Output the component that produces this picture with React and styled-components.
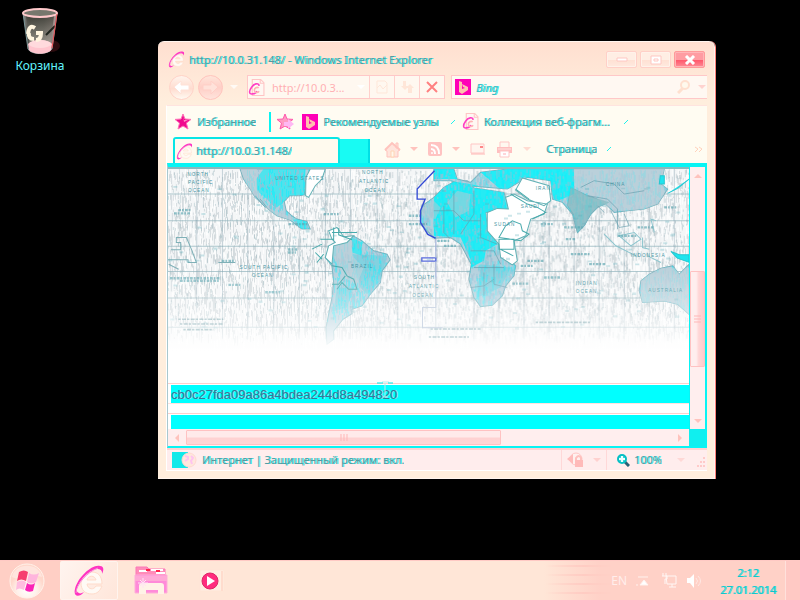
import React from 'react';
import styled, { createGlobalStyle, css } from 'styled-components';

const Global = createGlobalStyle`
  * { box-sizing: border-box; }
  body { margin: 0; background: #000; font: 11px/16px "Noto Sans", "Open Sans", sans-serif; color: #28aeb0; }
  button, input { font: inherit; color: inherit; margin: 0; padding: 0; border: 0; background: none; border-radius: 0; }
  button { display: flex; align-items: center; justify-content: center; cursor: pointer; }
  a { color: inherit; text-decoration: none; }
  svg { display: block; flex: none; }
`;

const Desktop = styled.div`
  min-height: 100vh;
  display: grid;
  grid-template: 1fr 40px / 80px minmax(0, 1fr);
`;
const Shortcut = styled.a`
  display: flex;
  flex-direction: column;
  align-items: center;
  gap: 2px;
  padding-top: 8px;
  height: 80px;
  font-size: 12px;
  color: #62f4ff;
`;
const Window = styled.main`
  margin: 41px 85px 81px 78px;
  display: flex;
  flex-direction: column;
  padding: 1px 7px 7px 8px;
  border: 1px solid #fff5ef;
  border-width: 1px 1px 1px 0;
  border-radius: 6px 6px 0 0;
  background: linear-gradient(#ffdfd0, #ffeedd 60px);
  box-shadow: 1px 0 0 #ff8078;
  min-width: 0;
`;
const TitleBar = styled.header`
  height: 31px;
  display: flex;
  align-items: center;
  gap: 3px;
  padding: 2px 2px 0;
`;
const Glitch = styled.span`
  font-size: 11px;
  color: #56999f;
  text-shadow: 1px 0 0 #24f2ee;
  white-space: nowrap;
  overflow: hidden;
  text-overflow: ellipsis;
`;
const Title = styled(Glitch)`flex: 1; padding-left: 1px;`;
const WindowButton = styled.button`
  width: 31px;
  height: 17px;
  border: 1px solid #ffd0c8;
  border-radius: 2px;
  background: linear-gradient(#ffeee4 50%, #ffe0d3 50%, #ffeadf);
  box-shadow: inset 0 0 0 1px #fff2ea;
  ${(p) => p.$close && css`
    border-color: #ff9a9a;
    background: linear-gradient(#ff9ca2 50%, #ff5368 50%, #ff8c96);
    box-shadow: inset 0 0 0 1px #ffb5b8;
  `}
`;
const NavBar = styled.nav`
  height: 31px;
  display: flex;
  align-items: flex-start;
  padding-top: 1px;
`;
const History = styled.div`
  display: flex;
  width: 81px;
  height: 24px;
  gap: 4px;
  align-items: center;
  padding-left: 3px;
`;
const RoundButton = styled.button`
  width: 25px;
  height: 25px;
  border-radius: 50%;
  border: 1px solid ${(p) => (p.$dim ? '#ffc4bd' : '#ffd3c8')};
  background: ${(p) => (p.$dim ? 'linear-gradient(#ffe5da, #ffcfc7 50%, #ffe4dc)' : 'linear-gradient(#fff4ed, #ffdccf 55%, #fffaf2)')};
`;
const Address = styled.div`
  display: flex;
  align-items: center;
  height: 24px;
  width: 198px;
  border: 1px solid #ffc8c8;
  background: #fff8f0;
`;
const AddressInput = styled.input`
  flex: 1;
  min-width: 0;
  height: 20px;
  padding-left: 7px;
  font-size: 11px;
  color: #ffb0b3;
  outline: 0;
`;
const AddressButton = styled.button`
  width: 25px;
  height: 22px;
  border-left: 1px solid #ffd0cc;
`;
const Search = styled.div`
  display: flex;
  flex: 1;
  min-width: 0;
  height: 24px;
  align-items: center;
  gap: 5px;
  margin-left: 6px;
  padding-left: 3px;
  border: 1px solid #ffc8c8;
  border-right: 0;
  background: #fff8f2;
`;
const SearchInput = styled.input`
  flex: 1;
  min-width: 0;
  height: 20px;
  outline: 0;
  font-style: italic;
  text-shadow: 1px 0 0 #24f2ee;
  &::placeholder { color: #3fb6bb; opacity: 1; }
`;
const BareButton = styled.button`
  min-width: ${(p) => p.$w || 16}px;
  height: 20px;
`;
const Panel = styled.section`
  flex: 1;
  display: flex;
  flex-direction: column;
  border-top: 1px solid #ffe4df;
  border-left: 1px solid #fff;
  background: #fffcf2;
  min-width: 0;
`;
const Favorites = styled.div`
  height: 31px;
  display: flex;
  align-items: center;
  gap: 6px;
  padding-left: 8px;
`;
const FavLink = styled.a`
  display: flex;
  align-items: center;
  gap: 5px;
  height: 20px;
  margin-right: ${(p) => p.$gap || 0}px;
`;
const FavSplit = styled.span`
  width: 2px;
  height: 20px;
  background: #08f4f2;
`;
const TabRow = styled.div`
  height: 26px;
  display: flex;
  align-items: stretch;
  padding-left: 6px;
`;
const Tab = styled.button`
  width: 167px;
  justify-content: flex-start;
  gap: 3px;
  padding-left: 1px;
  border: 2px solid #08e6e6;
  border-bottom: 0;
  border-radius: 3px 3px 0 0;
  background: #fffaee;
`;
const NewTab = styled.button`
  width: 30px;
  margin-top: 2px;
  background: #18fbf3;
  border-right: 2px solid #00dfe5;
`;
const Tools = styled.div`
  flex: 1;
  min-width: 0;
  display: flex;
  align-items: center;
  gap: 9px;
  padding: 0 4px 2px 14px;
`;
const PageMenu = styled(BareButton)`margin-left: 6px;`;
const Spacer = styled.span`flex: 1;`;
const Viewport = styled.div`
  flex: 1;
  display: grid;
  grid-template: 1fr 17px / minmax(0, 1fr) 16px;
  border: solid #08f4f4;
  border-width: 4px 2px 2px 1px;
  border-left-color: #a9c8ce;
  min-width: 0;
`;
const Document = styled.div`
  border-top: 2px solid #8ab9be;
  background: #fff;
  min-width: 0;
`;
const MapArt = styled.svg`
  width: 100%;
  height: 214px;
`;
const FieldRow = styled.label`
  display: block;
  position: relative;
  height: ${(p) => p.$h}px;
  margin-bottom: ${(p) => p.$after || 0}px;
  padding: 1px 0 0 3px;
  border-top: 1px solid #ffd0cc;
  border-bottom: ${(p) => (p.$after ? '1px solid #ffe2df' : '0')};
`;
const Field = styled.input`
  display: block;
  width: 100%;
  height: 100%;
  font: 13px/18px "Liberation Sans", Arial, sans-serif;
  color: #35789a;
  background: #00ffff;
  text-shadow: 1px 0 0 #a5d9dc;
  outline: 0;
`;
const Caret = styled.svg`
  position: absolute;
  left: 209px;
  top: -3px;
`;
const Scrollbar = styled.div`
  display: flex;
  flex-direction: ${(p) => (p.$vertical ? 'column' : 'row')};
  background: #ffeeee;
  ${(p) => p.$vertical && css`border-left: 1px solid #08f4f4;`}
`;
const ScrollArrow = styled.button`
  width: ${(p) => (p.$vertical ? '100%' : '18px')};
  height: 17px;
`;
const Track = styled.div`
  flex: 1;
  display: flex;
  flex-direction: ${(p) => (p.$vertical ? 'column' : 'row')};
  ${(p) => (p.$vertical ? 'padding-top: 87px;' : 'padding: 1px 0;')}
`;
const Thumb = styled.button`
  border: 1px solid #ffc2c2;
  border-radius: 1px;
  ${(p) => (p.$vertical
    ? 'width: 15px; height: 96px; background: linear-gradient(90deg, #ffeeee 40%, #ffd6d6 60%, #ffcccc);'
    : 'width: 65%; background: linear-gradient(#ffeaea 45%, #ffd2d2 55%, #ffd6d6);')}
`;
const Corner = styled.div`background: #10efef;`;
const Status = styled.footer`
  height: 23px;
  display: flex;
  align-items: center;
  border-top: 2px solid #ffd0d0;
  border-bottom: 1px solid #fff;
  background: #ffeded;
`;
const StatusZone = styled.div`
  flex: 1;
  min-width: 0;
  display: flex;
  align-items: center;
  gap: 5px;
  padding-left: 5px;
`;
const StatusButton = styled.button`
  width: ${(p) => p.$w}px;
  height: 20px;
  gap: 4px;
  border-left: 1px solid #ffd8d8;
`;
const StatusArrow = styled.span`
  margin-left: ${(p) => p.$left}px;
`;
const Taskbar = styled.footer`
  grid-column: 1 / -1;
  display: flex;
  align-items: stretch;
  border-top: 1px solid #ffc9c4;
  background: linear-gradient(90deg, #ffcfc5 60px, #ffe6d7 61px, #ffe6d7 68%, #ffd1c7 75%);
`;
const Start = styled.button`width: 54px; margin-right: 6px;`;
const TaskButton = styled.button`
  width: ${(p) => p.$w || 60}px;
  ${(p) => p.$active && css`
    border: 1px solid #fff4ee;
    border-radius: 2px;
    background: linear-gradient(120deg, #fff4ef, #ffe6da);
  `}
`;
const Streaks = styled.span`
  width: 65px;
  margin: 4px 0;
  background: repeating-linear-gradient(#ffcbc2 0 2px, transparent 2px 9px);
  mask-image: linear-gradient(90deg, transparent, #000 60%, transparent);
`;
const Tray = styled.div`
  display: flex;
  align-items: center;
  gap: 8px;
  color: #ffeeec;
  font-size: 12px;
`;
const Clock = styled.time`
  width: 74px;
  margin-left: 9px;
  padding-top: 3px;
  text-align: center;
  line-height: 17px;
  font-size: 11px;
  color: #12c4c8;
  text-shadow: 1px 0 0 #24e8e5;
`;
const ShowDesktop = styled.button`
  width: 15px;
  border-left: 1px solid #ffe1dc;
  background: #ffc9c4;
`;

const Arrow = ({ dir = 'down', color = '#ffc3bd' }) => {
  const d = { down: 'M0 2h8L4 6z', up: 'M0 6h8L4 2z', left: 'M6 0v8L2 4z', right: 'M2 0v8l4-4z' }[dir];
  return <svg width="8" height="8" viewBox="0 0 8 8"><path d={d} fill={color} /></svg>;
};

const Tick = () => <svg width="6" height="6" viewBox="0 0 6 6"><path d="M1 5 5 1" stroke="#20f2ed" /></svg>;

const Explorer = ({ size = 17, page }) => (
  <svg width={size} height={size} viewBox="0 0 32 32">
    {page && <path d="M8 1h16l6 6v24H8z" fill="#fff8f3" stroke="#ffc4c4" strokeWidth="2" />}
    {page && <path d="M23 1v7h7" fill="none" stroke="#ffc4c4" strokeWidth="2" />}
    {page ? (
      <>
        <path d="M21 13C20 7 12 8 7 15C1 23 2 29 8 28c4 0 8-3 9-5" fill="none" stroke="#ff3fc4" strokeWidth="3" />
        <path d="M20 17c-3-3-8 0-8 4 0 5 6 6 9 2" fill="none" stroke="#ffb4b4" strokeWidth="3" />
      </>
    ) : (
      <>
        <path d="M8 18C8 11 13 7 19 7s10 4 10 12H14c1 6 7 6 9 2h6c-2 5-5 8-10 8C12 29 8 25 8 18zm6-3h9c-1-5-8-5-9 0z" fill="#fffaf5" fillRule="evenodd" stroke="#ffdccb" />
        <path d="M29 9C30 3 22 2 14 9C5 17 1 27 6 28C7 29 9 28 11 27C6 33 0 32 2 24C5 12 19-1 27 1C31 1 31 5 29 9z" fill="#ff32c2" />
        <path d="M3 28C3 20 14 7 25 3" fill="none" stroke="#f690d7" />
      </>
    )}
  </svg>
);

const Star = ({ add }) => (
  <svg width="17" height="17" viewBox="0 0 17 17">
    <path d="m8 1 2 5 6 .4-4.6 3.7L13 16l-5-3-5 3 1.5-5.9L0 6.4 6 6z" fill={add ? '#ff9cc2' : '#f00a8e'} stroke={add ? '#ff58ae' : '#ff70b6'} />
    {!add && <path d="m8 3 1 4 4 0-4 2z" fill="#ff8ac2" />}
    {add && <path d="M7 9h4V6l6 5-6 5v-3H7z" fill="#ffb8f3" />}
  </svg>
);

const BingLogo = () => (
  <svg width="16" height="16" viewBox="0 0 16 16">
    <path d="M0 0h16v16H0z" fill="#ff00b7" />
    <path d="m4 2 3 1v7l3-1-2-1-1-3 6 3v3l-6 4-3-2z" fill="#ffc0ae" />
  </svg>
);

const BackArrow = ({ flip }) => (
  <svg width="17" height="15" viewBox="0 0 17 15">
    <path d={flip ? 'M16 7 9 1v4H1v5h8v4z' : 'M1 7l7-6v4h8v5H8v4z'} fill={flip ? '#ffe2da' : '#fff'} stroke={flip ? '#ffcfc7' : '#ffe2d8'} />
  </svg>
);

const RecycleBin = () => (
  <svg width="42" height="48" viewBox="0 0 42 48">
    <defs>
      <linearGradient id="bin"><stop stopColor="#8a8b88" /><stop offset=".2" stopColor="#444540" /><stop offset=".6" stopColor="#5a5955" /><stop offset="1" stopColor="#b5a09e" /></linearGradient>
      <linearGradient id="binShade" x2="0" y2="1"><stop stopColor="#3c3c34" /><stop offset="1" stopColor="#b5b0a5" /></linearGradient>
    </defs>
    <ellipse cx="32" cy="38" rx="9" ry="6" fill="#2c0b0e" />
    <path d="M4 5 9 41c3 6 20 6 24 0l5-36z" fill="url(#bin)" stroke="#7e9899" />
    <path d="M7 8 11 39h20l4-31z" fill="url(#binShade)" opacity=".75" />
    <path d="M9 36c5-5 20-5 24 0l-1 6c-4 5-18 5-22 0z" fill="#ffc5ce" />
    <ellipse cx="21" cy="36" rx="11" ry="4" fill="#ffdadd" />
    <ellipse cx="21" cy="5" rx="17" ry="4" fill="#77776d" stroke="#ffc9cb" strokeWidth="2" />
    <path d="M16 20q-6-4-7 6" fill="none" stroke="#fff5df" strokeWidth="4" />
    <path d="M10 25q-1 6 5 6M17 32q5 0 5-7l-5 0" fill="none" stroke="#fff5df" strokeWidth="4" />
    <path d="M27 27 36 18" stroke="#20251f" strokeWidth="2" />
    <path d="M38 6 33 40" stroke="#f05055" />
  </svg>
);

const Magnifier = ({ color, plus }) => (
  <svg width="14" height="14" viewBox="0 0 14 14">
    {plus ? (
      <>
        <path d="m9 9 4 4" stroke="#276076" strokeWidth="3" />
        <circle cx="6" cy="6" r="4" fill="#3fd5d8" stroke="#06bfc4" strokeWidth="2" />
        <path d="M6 3v6M3 6h6" stroke="#eaffff" strokeWidth="2" />
      </>
    ) : (
      <>
        <path d="m6 8-5 5" stroke={color} strokeWidth="3" />
        <circle cx="8" cy="5" r="4" fill="#fff9ed" stroke={color} strokeWidth="2" />
      </>
    )}
  </svg>
);

const Home = () => (
  <svg width="17" height="17" viewBox="0 0 17 17">
    <path d="M12 2h2v5h-2zM1 9l7-7 8 7-2 1v6H3v-6z" fill="#ffe4dc" stroke="#ffc3bd" />
    <path d="m1 9 7-7 8 7" fill="none" stroke="#ffc4be" strokeWidth="2" />
    <path d="M7 10h3v6H7z" fill="#fff7ec" stroke="#ffd5b4" />
  </svg>
);
const Feed = () => (
  <svg width="14" height="14" viewBox="0 0 14 14">
    <rect width="14" height="14" rx="2" fill="#ffc3c2" />
    <circle cx="4" cy="11" r="1" fill="#fff" />
    <path d="M3 7c3 0 4 2 4 5M3 3c6 0 8 4 8 9" fill="none" stroke="#fff" strokeWidth="2" />
  </svg>
);
const Mail = () => (
  <svg width="15" height="12" viewBox="0 0 15 12">
    <path d="M1 1h13v9H1z" fill="#fff5ef" stroke="#ffc6c5" /><path d="M1 11h14" stroke="#ffb5b5" /><path d="M10 3h3v2h-3z" fill="#f88" />
  </svg>
);
const Printer = () => (
  <svg width="17" height="17" viewBox="0 0 17 17">
    <path d="M4 1h9v7H4z" fill="#fff8f0" stroke="#ffc6c5" /><path d="M1 6h15v6H1z" fill="#ffbfc0" />
    <path d="M2 8h13" stroke="#ffe4df" /><path d="M4 10h9v6H4z" fill="#fff" stroke="#ffc6c5" /><path d="M7 13h3" stroke="#ffabb3" />
  </svg>
);

const streaks = (count, seed, x0, y0, w, h, len) => {
  let s = seed;
  const next = () => {
    s = (s * 16807) % 2147483647;
    return s / 2147483647;
  };
  let d = '';
  for (let i = 0; i < count; i += 1) {
    const column = Math.round(x0 + next() * w);
    d += `M${column - (column % 3) + 1} ${Math.round(y0 + next() * h)}v${Math.round(5 + next() * len)}`;
  }
  return d;
};
const oceanMarks = streaks(6500, 71, 24, 15, 1560, 500, 26);
const darkMarks = streaks(1500, 317, 24, 15, 1560, 460, 12);
const whiteMarks = streaks(4200, 137, 24, 15, 1560, 520, 28);
const landMarks = streaks(4200, 923, 250, 15, 1334, 440, 24);
const landGaps = streaks(3600, 4421, 250, 15, 1334, 440, 14);
const specks = streaks(160, 42, 30, 60, 1530, 430, 2);

const land = {
  northAmerica: 'M240 15 250 45 270 75 285 100 318 130 350 155 390 168 425 195 450 195 440 172 410 165 395 155 378 140 372 112 388 95 418 95 432 92 436 50 450 35 480 15z',
  southAmerica: 'M515 240 550 220 578 215 605 230 640 260 680 270 689 287 665 320 660 355 630 390 605 425 575 435 575 448 548 465 520 500 520 525 500 540 497 490 515 400 520 355 515 305 495 280z',
  africa: 'M820 100 850 70 880 53 920 50 940 72 1030 85 1045 135 975 145 980 190 1010 220 1020 260 1065 305 1060 335 1035 365 1025 395 995 423 960 427 940 400 925 345 932 300 900 240 870 220 822 222 780 180 785 125z',
  europeAsia: 'M820 15H880L890 45 930 55 960 25 1040 15H1510L1500 60 1520 75 1490 120 1450 135 1400 140 1360 145 1330 115 1310 130 1290 150 1270 185 1250 205 1235 150 1205 115 1175 105 1170 50 1100 40 1040 75 920 65 870 50 820 50z',
  india: 'M1230 70 1280 95 1345 115 1310 130 1290 150 1270 185 1250 205 1238 150 1220 125z',
  australia: 'M1440 350 1465 330 1500 312 1535 305 1555 330 1584 300V450L1550 420 1510 410 1445 415 1435 380z',
};

const labels = [
  [82, 36, 'NORTH'], [84, 61, 'PACIFIC'], [84, 84, 'OCEAN'], [605, 30, 'NORTH'], [596, 57, 'ATLANTIC'], [612, 83, 'OCEAN'],
  [345, 48, 'UNITED STATES'], [238, 314, 'SOUTH PACIFIC'], [275, 339, 'OCEAN'], [572, 310, 'BRAZIL'], [760, 345, 'SOUTH'], [745, 372, 'ATLANTIC'], [755, 397, 'OCEAN'],
  [1125, 78, 'IRAN'], [1335, 65, 'CHINA'], [1410, 278, 'INDONESIA'], [1245, 362, 'INDIAN'], [1245, 386, 'OCEAN'], [1462, 384, 'AUSTRALIA'],
  [1080, 132, 'SAUDI'], [1000, 185, 'SUDAN'],
];

const WorldMap = () => (
  <MapArt viewBox="24 15 1560 642" preserveAspectRatio="xMinYMin slice" role="img" aria-label="World time zones">
    <defs>
      <clipPath id="landClip">{Object.entries(land).map(([k, d]) => <path key={k} d={d} />)}</clipPath>
      <linearGradient id="fade" x2="0" y2="1"><stop offset=".46" stopColor="#fff" stopOpacity="0" /><stop offset=".7" stopColor="#fff" stopOpacity=".5" /><stop offset=".85" stopColor="#fff" /></linearGradient>
    </defs>
    <path d="M24 15h1560v642H24z" fill="#f4f6f7" />
    <path d={oceanMarks} stroke="#bac5cb" strokeWidth="3" opacity=".55" />
    <path d={whiteMarks} stroke="#fff" strokeWidth="3" opacity=".85" />
    <path d={darkMarks} stroke="#8fb0b8" strokeWidth="3" opacity=".38" />
    <path d="M24 90h1560M24 170h1560M24 246h1560M24 322h1560M24 401h1560M24 489h1560" stroke="#8fb3bc" strokeWidth="3" opacity=".7" />
    <path d="M110 15v430M187 15v510M263 15v510M341 15v510M417 15v510M495 15v510M570 15v510M650 15v510M712 15v510M826 15v510M940 15v510M1015 15v510M1090 15v510M1165 15v510M1240 15v510M1315 15v510M1390 15v510M1465 15v510M1540 15v510" stroke="#7f9dab" strokeWidth="3" opacity=".4" />
    {Object.entries(land).map(([k, d]) => <path key={k} d={d} fill="#b3d0dd" stroke="#78b2bd" strokeWidth="3" />)}
    <g clipPath="url(#landClip)">
      <path d="M288 45 310 15H436L432 92 388 95 372 112 350 130 340 125 320 105 290 80zM390 160 440 172 445 195 425 195zM575 220 605 235 605 275 575 265z" fill="#0cf0f8" opacity=".6" />
      <path d="M820 100 850 70 880 53 930 60 1030 85 1040 140 975 145 985 190 1010 240 975 260 970 290 930 310 932 290 900 220 820 215z" fill="#0cf0f8" opacity=".85" />
      <path d="M820 15H880L890 45H820zM960 25 1040 15H1240V90L1180 115 1170 60 1090 40 1030 85z" fill="#0af2fa" opacity=".85" />
      <path d="M575 270 680 275 660 350 620 390 600 370zM530 370 580 370 560 430 520 440zM960 300 1050 310 1020 370 950 400z" fill="#3ad5e6" opacity=".4" />
      <path d={landMarks} stroke="#00f2ff" strokeWidth="3" opacity=".45" />
      <path d={landGaps} stroke="#9abfd4" strokeWidth="3" opacity=".75" />
      <path d="M785 125 820 110 840 130 825 165 790 160zM860 115l30-35 40 10-5 50-40 20z" fill="#aacbd5" opacity=".6" />
      <path d="M1240 15H1510V140H1360L1310 105 1240 65zM1440 310H1584V450H1440zM240 15h50v60l40 60 80 30-20 5-60-20-60-60zM500 240l70-20 10 60 30 30-20 50-40-20z" fill="#bfd0d9" opacity=".65" />
      <path d={land.india} fill="#83b9bf" opacity=".7" />
    </g>
    <path d="M437 40 450 15H495L485 45 465 65 445 100 436 95zM495 280 505 245 525 235 515 225 505 200 530 190 550 218 580 215 560 235 520 245 515 300zM980 145 1010 133 1043 135 1035 100 1060 90 1100 110 1160 120 1150 150 1110 165 1095 215 1060 230 1070 290 1055 302 1020 280 1015 240 980 200zM1085 42 1165 65 1170 110 1150 125 1100 105 1065 78z" fill="#fff" stroke="#62b1b5" strokeWidth="3" />
    <path d="M1015 220 1035 185 1055 170 1080 180 1085 200 1105 210 1080 230 1050 225zM1015 225h45v30h-45zM1018 255l40 20M1050 90l50 30 30 10 25 15-40 20M1065 75l40 30M520 190v40M535 192v20l40 15M515 305l30 5 15 25 20 10 10 30-25 0-20-20-15 20M515 360l20 0 20-25M455 255l30-15M465 265l20 20M470 295l20-25M480 225h40M515 205h75" fill="none" stroke="#48aaac" strokeWidth="3" />
    <path d="M820 140h60l30 30 50 0M850 125v80l20 20M880 80v130M940 80v70l-40 60M960 150v70l50 20M930 260h70l20 40M940 310h90M970 325v70M1000 300v60l40 10M930 370l40-5 30-20M1280 95l60 10 30 30 0 60M1350 140l25 50 30-5-15-35M1310 125l20 20M1260 70l40-20 60 10 30 30 60-10M285 95l30 35M300 105l20 25" fill="none" stroke="#679fae" strokeWidth="2" />
    <path d="M1330 210l35 35 60 30M1375 215l35 30 30-20-20-20zM1445 220v30l20 5M1460 275l40 20M1480 205l-10-40 15 5" fill="none" stroke="#8cc5ce" strokeWidth="3" />
    <path d="M1530 262l25 10 29 0v22l-35-12zM1520 88l30-15 34-28M1495 60h15v-25l-12 0z" fill="#1fe4ee" stroke="#26c6d0" strokeWidth="3" />
    <path d="M24 287h60v8h25l-15-40-15-35H49v15h13v22H33M26 300l30 15M175 295h50" fill="none" stroke="#7fb0b7" strokeWidth="3" />
    <path d="M42 148h50M55 138h40M30 342h150M60 350h120M185 290h40M205 362h40M315 384h45M383 256h28M383 265h24M490 150h45M385 180h60M745 155h40M745 180h55M1210 190h60M1215 225h30M1140 180h40M1230 270h60M1285 300h50M1080 305h40M1055 358h50M1100 290h50M1150 340h50M1370 215h60M1430 190h50M1510 130h40M830 230h40M850 245h40" stroke="#5ba5b0" strokeWidth="7" strokeDasharray="8 3 5 4" opacity=".65" />
    <g fontFamily="Liberation Sans, Arial, sans-serif" fontSize="14" letterSpacing="3" fill="#4896a4">
      {labels.map(([x, y, text]) => <text key={`${x}-${y}`} x={x} y={y}>{text}</text>)}
    </g>
    <path d={specks} stroke="#5baebb" strokeWidth="12" opacity=".3" />
    <path d="M24 15h1560v642H24z" fill="url(#fade)" />
    <path d="M55 465h135M60 479h128M70 496h90M1125 474h165M810 494h150M805 518h120" stroke="#8fb3ba" strokeWidth="5" strokeDasharray="7 4 12 3" opacity=".5" />
    <path d="M822 20 770 75v30h24l-14 35v35l22 36 24 12" fill="none" stroke="#344bd5" strokeWidth="4" />
    <path d="M826 281h-42v10h42z" fill="none" stroke="#596cdd" strokeWidth="4" />
    <path d="M826 223v58M826 291v55" stroke="#a9b5df" strokeWidth="3" />
    <path d="M826 340v90h-40v60h60" fill="none" stroke="#d0d9e6" strokeWidth="3" />
  </MapArt>
);

const StartOrb = () => (
  <svg width="38" height="38" viewBox="0 0 38 38">
    <defs><radialGradient id="orb" cy=".75"><stop stopColor="#fff" /><stop offset=".6" stopColor="#fff0e9" /><stop offset="1" stopColor="#ffd8cc" /></radialGradient></defs>
    <circle cx="19" cy="19" r="17" fill="url(#orb)" stroke="#fff3eb" strokeWidth="1" />
    <path d="M4 15C7 0 31 0 34 15 24 11 14 20 4 15z" fill="#fff" opacity=".35" />
    <path d="M11 10q5-3 9 0l-2 9q-5-3-9 0z" fill="#f63f70" />
    <path d="M21 11q5 3 10 0l-3 9q-5 3-9 0z" fill="#ffb5dd" />
    <path d="M9 20q5-3 9 0l-2 8q-5-3-8 0z" fill="#ffbcdf" />
    <path d="M19 21q4 3 8 0l-2 8q-5 2-8-1z" fill="#fa25b7" />
  </svg>
);
const Folder = () => (
  <svg width="34" height="30" viewBox="0 0 34 30">
    <path d="M2 4V1h11l2 2h16v7H2z" fill="#ff8cb9" stroke="#fb78b9" />
    <path d="M5 5h8M17 4h12M22 7h9" stroke="#fff" strokeWidth="2" /><path d="M12 4h4M22 5h4" stroke="#ff244f" strokeWidth="2" />
    <path d="M1 9h32v18H1z" fill="#ff8bd9" stroke="#ffafd8" /><path d="M1 10h32v5H1z" fill="#ffa9d6" />
    <path d="M5 28V20q0-3 3-3h19q3 0 3 3v8h-6v-4H12v4z" fill="#fff3e7" />
    <path d="M9 12v10M4 17h10M6 14l6 6M12 14l-6 6" stroke="#ffe3f4" />
  </svg>
);
const Player = () => (
  <svg width="28" height="24" viewBox="0 0 28 24">
    <path d="M1 1h24v21H1z" fill="#ffeee2" stroke="#ffe5d6" /><path d="M23 2v20" stroke="#ffdccd" strokeWidth="2" />
    <circle cx="11" cy="12" r="8" fill="#ff2c7e" stroke="#dd2868" /><path d="m8 7 8 5-8 5z" fill="#fff" />
  </svg>
);

export default function App() {
  return (
    <>
      <Global />
      <Desktop>
        <Shortcut href="#bin"><RecycleBin />Корзина</Shortcut>
        <Window>
          <TitleBar>
            <Explorer />
            <Title>http://10.0.31.148/ - Windows Internet Explorer</Title>
            <WindowButton aria-label="Свернуть"><svg width="12" height="6"><path d="M1 1h10v3H1z" fill="#fff" stroke="#ffc7c2" /></svg></WindowButton>
            <WindowButton aria-label="Развернуть"><svg width="12" height="10"><path d="M1 1h10v8H1zM4 4h4v2H4z" fill="#fff" stroke="#ffc7c2" /></svg></WindowButton>
            <WindowButton $close aria-label="Закрыть"><svg width="12" height="10"><path d="m2 1 8 8m0-8L2 9" stroke="#fff" strokeWidth="3" /></svg></WindowButton>
          </TitleBar>
          <NavBar>
            <History>
              <RoundButton aria-label="Назад"><BackArrow /></RoundButton>
              <RoundButton $dim aria-label="Вперед"><BackArrow flip /></RoundButton>
              <BareButton $w={14} aria-label="Журнал"><Arrow color="#fffaf5" /></BareButton>
            </History>
            <Address>
              <Explorer page />
              <AddressInput aria-label="Адрес" defaultValue="http://10.0.3..." />
              <BareButton aria-label="Показать адреса"><Arrow color="#fff" /></BareButton>
              <AddressButton aria-label="Совместимость"><svg width="12" height="14"><path d="M1 1h8l2 2v10H1zM1 8l3-3 3 4 4-4" fill="none" stroke="#ffe7d9" /></svg></AddressButton>
              <AddressButton aria-label="Обновить"><svg width="14" height="14"><path d="M3 1h3v5h3L5 10 1 6h2zm5 12V8H6l4-4 4 4h-2v5z" fill="#ffe6d8" /></svg></AddressButton>
              <AddressButton aria-label="Остановить"><svg width="12" height="12"><path d="m1 1 10 10m0-10L1 11" stroke="#ff8080" strokeWidth="2" /></svg></AddressButton>
            </Address>
            <Search>
              <BingLogo />
              <SearchInput aria-label="Поиск" placeholder="Bing" />
              <BareButton aria-label="Найти"><Magnifier color="#ffe0cf" /></BareButton>
              <BareButton $w={10} aria-label="Параметры поиска"><Arrow color="#ffd3d0" /></BareButton>
            </Search>
          </NavBar>
          <Panel>
            <Favorites>
              <FavLink href="#fav" $gap={7}><Star /><Glitch>Избранное</Glitch></FavLink>
              <FavSplit />
              <FavLink href="#add" aria-label="Добавить" $gap={2}><Star add /></FavLink>
              <FavLink href="#sites" $gap={5}><BingLogo /><Glitch>Рекомендуемые узлы</Glitch></FavLink>
              <Tick />
              <FavLink href="#slices" $gap={7}><Explorer page /><Glitch>Коллекция веб-фрагм...</Glitch></FavLink>
              <Tick />
            </Favorites>
            <TabRow>
              <Tab><Explorer /><Glitch>http://10.0.31.148/</Glitch></Tab>
              <NewTab aria-label="Новая вкладка" />
              <Tools>
                <BareButton aria-label="Домой"><Home /></BareButton><Arrow />
                <BareButton aria-label="Каналы"><Feed /></BareButton><Arrow />
                <BareButton aria-label="Почта"><Mail /></BareButton>
                <BareButton $w={20} aria-label="Печать"><Printer /></BareButton><Arrow color="#ffdcd2" />
                <PageMenu><Glitch>Страница</Glitch></PageMenu><Tick />
                <Spacer />
                <BareButton $w={10} aria-label="Еще"><svg width="9" height="7"><path d="m1 1 3 2-3 3m4-5 3 2-3 3" fill="none" stroke="#ffd2bd" /></svg></BareButton>
              </Tools>
            </TabRow>
            <Viewport>
              <Document>
                <WorldMap />
                <FieldRow $h={21} $after={9}>
                  <Field aria-label="Хеш" defaultValue="cb0c27fda09a86a4bdea244d8a494820" />
                  <Caret width="16" height="20" viewBox="0 0 16 20"><path d="M5 1h7M8 2v14M6 16h5" stroke="#b9ecec" fill="none" /><path d="M0 2h6M11 2h5" stroke="#00eaea" /></Caret>
                </FieldRow>
                <FieldRow $h={16}><Field aria-label="Ответ" /></FieldRow>
              </Document>
              <Scrollbar $vertical>
                <ScrollArrow $vertical aria-label="Вверх"><Arrow dir="up" /></ScrollArrow>
                <Track $vertical><Thumb $vertical aria-label="Вертикальная прокрутка"><svg width="7" height="8"><path d="M0 1h7M0 4h7M0 7h7" stroke="#ffb7b7" /></svg></Thumb></Track>
                <ScrollArrow $vertical aria-label="Вниз"><Arrow /></ScrollArrow>
              </Scrollbar>
              <Scrollbar>
                <ScrollArrow aria-label="Влево"><Arrow dir="left" /></ScrollArrow>
                <Track><Thumb aria-label="Горизонтальная прокрутка"><svg width="8" height="7"><path d="M1 0v7M4 0v7M7 0v7" stroke="#ffb7b7" /></svg></Thumb></Track>
                <ScrollArrow aria-label="Вправо"><Arrow dir="right" /></ScrollArrow>
              </Scrollbar>
              <Corner />
            </Viewport>
            <Status>
              <StatusZone>
                <svg width="25" height="16" viewBox="0 0 25 16"><path d="M0 0h16v16H0z" fill="#12e9e9" /><circle cx="17" cy="8" r="7" fill="#ffe7dc" stroke="#ffd8d1" /><path d="m13 4 3 1 0 2-3 2M19 4l2 2-2 3 1 3" fill="none" stroke="#ffc3f0" strokeWidth="2" /></svg>
                <Glitch>Интернет | Защищенный режим: вкл.</Glitch>
              </StatusZone>
              <StatusButton $w={45} aria-label="Защита">
                <svg width="17" height="16" viewBox="0 0 17 16"><circle cx="9" cy="7" r="6" fill="#fff1ef" stroke="#ffc7c5" /><path d="m0 7 6-5v10z" fill="#ffbcbb" /><path d="M9 8V6q3-4 5 0v2" fill="none" stroke="#ffc0bd" strokeWidth="2" /><path d="M8 8h8v7H8z" fill="#ffbab9" /></svg>
                <StatusArrow $left={5}><Arrow color="#ffd1cf" /></StatusArrow>
              </StatusButton>
              <StatusButton $w={88}>
                <Magnifier plus /><Glitch>100%</Glitch><StatusArrow $left={11}><Arrow color="#ffd8d6" /></StatusArrow>
              </StatusButton>
              <svg width="13" height="18"><path d="M9 7h2M6 11h2M9 11h2M3 15h2M6 15h2M9 15h2" stroke="#ffcac9" strokeWidth="2" /></svg>
            </Status>
          </Panel>
        </Window>
        <Taskbar>
          <Start aria-label="Пуск"><StartOrb /></Start>
          <TaskButton $active $w={58} aria-label="Internet Explorer"><Explorer size={32} /></TaskButton>
          <TaskButton $w={66} aria-label="Проводник"><Folder /></TaskButton>
          <TaskButton $w={58} aria-label="Проигрыватель"><Player /></TaskButton>
          <Spacer />
          <Streaks />
          <Tray>
            <span>EN</span>
            <svg width="18" height="14"><path d="M3 3h10M1 11h2m2 0 4-5 4 5z" fill="#fff" stroke="#fff2ee" /></svg>
            <svg width="17" height="15"><path d="M5 3h10v8H6zM8 14h7M11 11v3M2 0v3M5 0v3M1 3h5v3H4v5" fill="none" stroke="#fff7f5" strokeWidth="1" /></svg>
            <svg width="16" height="14"><path d="M1 4h3l4-4v14L4 9H1z" fill="#fff" /><path d="M10 4q3 3 0 6m2-8q5 5 0 10" fill="none" stroke="#ffe8e4" /></svg>
          </Tray>
          <Clock>2:12<br />27.01.2014</Clock>
          <ShowDesktop aria-label="Показать рабочий стол" />
        </Taskbar>
      </Desktop>
    </>
  );
}
